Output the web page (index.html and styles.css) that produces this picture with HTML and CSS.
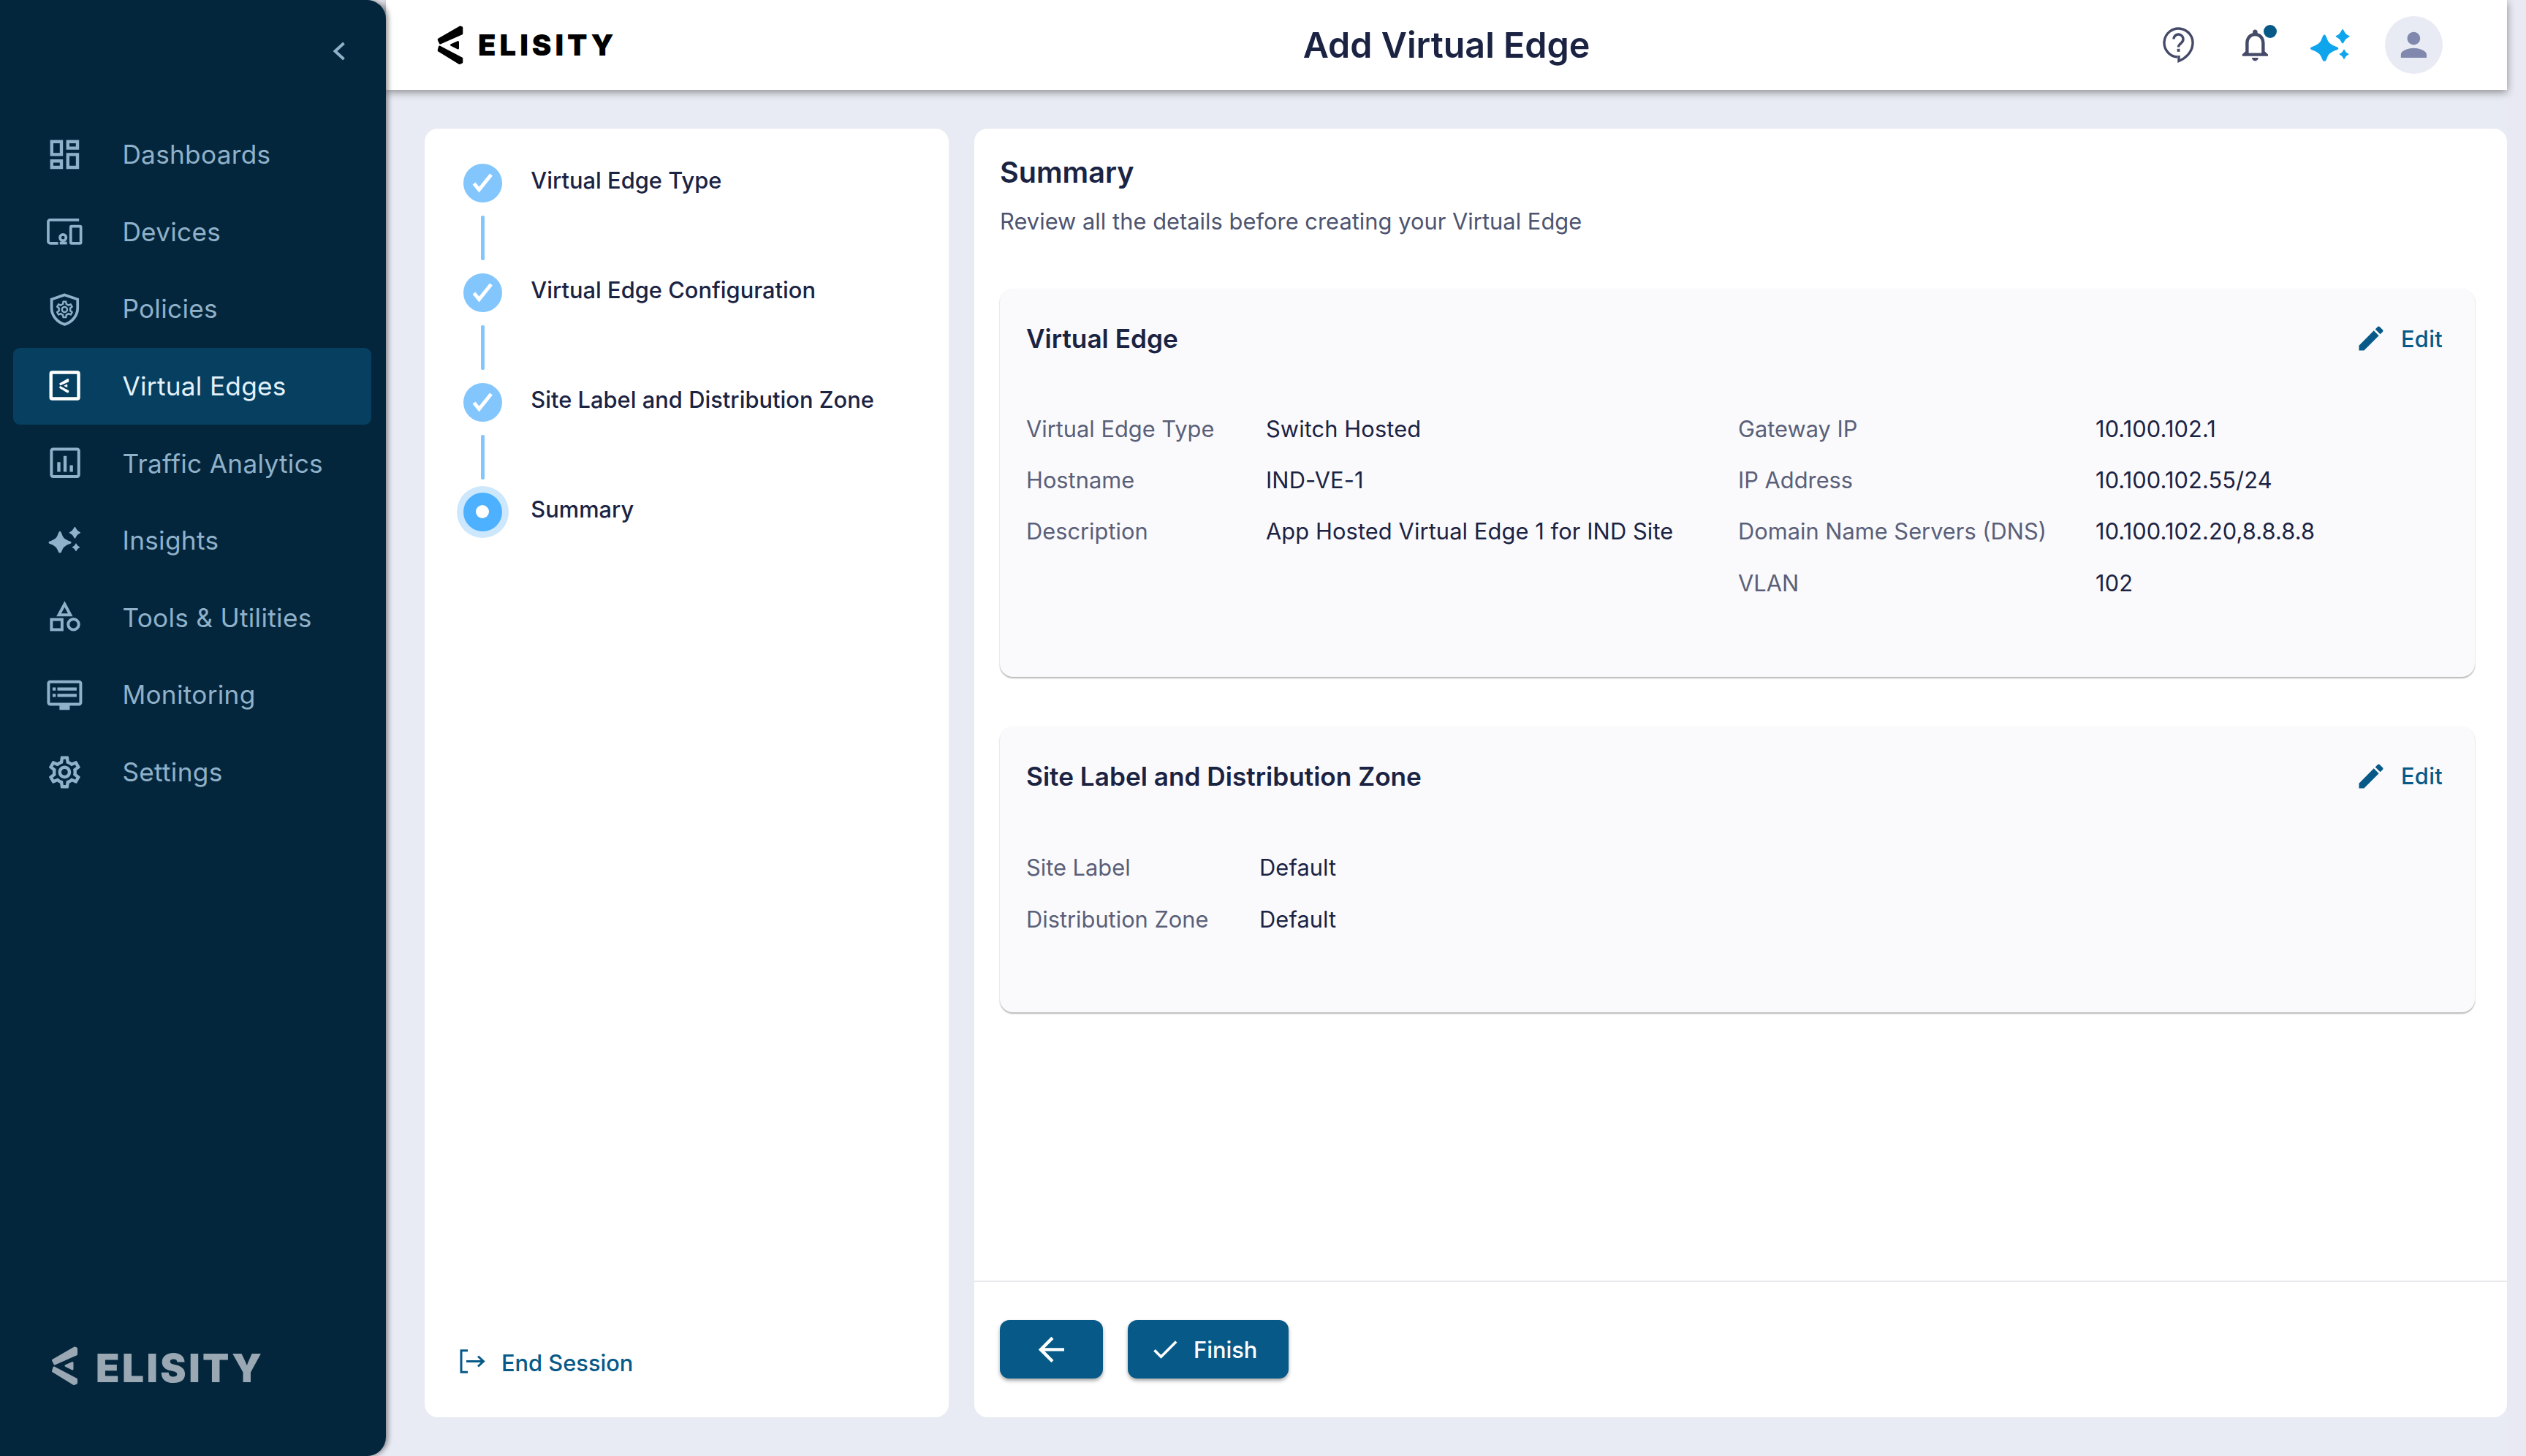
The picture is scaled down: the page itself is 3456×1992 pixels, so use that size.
FILE: index.html
```html
<!DOCTYPE html>
<html lang="en">
<head>
<meta charset="utf-8">
<title>Add Virtual Edge</title>
<link rel="stylesheet" href="styles.css">
</head>
<body>
<svg class="defs" width="0" height="0" aria-hidden="true">
  <defs>
    <symbol id="mark" viewBox="0 0 35 53">
      <g fill="currentColor" stroke="currentColor" stroke-width="3" stroke-linejoin="round">
        <polygon points="31,2 33.5,3 33.5,11 4,24 1.5,19"/>
        <polygon points="3,29 33.5,45 33.5,50 30,51.500 1.500,34"/>
        <polygon points="19,26.500 28,22.500 28,31"/>
      </g>
    </symbol>
    <symbol id="gear" viewBox="0 0 24 24">
      <path fill="currentColor" d="M19.43 12.98c.04-.32.07-.64.07-.98 0-.34-.03-.66-.07-.98l2.11-1.65c.19-.15.24-.42.12-.64l-2-3.46c-.09-.16-.26-.25-.44-.25-.06 0-.12.01-.17.03l-2.49 1c-.52-.4-1.08-.73-1.69-.98l-.38-2.65C14.46 2.18 14.25 2 14 2h-4c-.25 0-.46.18-.49.42l-.38 2.65c-.61.25-1.17.59-1.69.98l-2.49-1c-.06-.02-.12-.03-.18-.03-.17 0-.34.09-.43.25l-2 3.46c-.13.22-.07.49.12.64l2.11 1.65c-.04.32-.07.65-.07.98 0 .33.03.66.07.98l-2.11 1.65c-.19.15-.24.42-.12.64l2 3.46c.09.16.26.25.44.25.06 0 .12-.01.17-.03l2.49-1c.52.4 1.08.73 1.69.98l.38 2.65c.03.24.24.42.49.42h4c.25 0 .46-.18.49-.42l.38-2.65c.61-.25 1.17-.59 1.69-.98l2.49 1c.06.02.12.03.18.03.17 0 .34-.09.43-.25l2-3.46c.12-.22.07-.49-.12-.64l-2.11-1.65zm-1.98-1.71c.04.31.05.52.05.73 0 .21-.02.43-.05.73l-.14 1.13.89.7 1.08.84-.7 1.21-1.27-.51-1.04-.42-.9.68c-.43.32-.84.56-1.25.73l-1.06.43-.16 1.13-.2 1.35h-1.4l-.19-1.35-.16-1.13-1.06-.43c-.43-.18-.83-.41-1.23-.71l-.91-.7-1.06.43-1.27.51-.7-1.21 1.08-.84.89-.7-.14-1.13c-.03-.31-.05-.54-.05-.74s.02-.43.05-.73l.14-1.13-.89-.7-1.08-.84.7-1.21 1.27.51 1.04.42.9-.68c.43-.32.84-.56 1.25-.73l1.06-.43.16-1.13.2-1.35h1.39l.19 1.35.16 1.13 1.06.43c.43.18.83.41 1.23.71l.91.7 1.06-.43 1.27-.51.7 1.21-1.07.85-.89.7.14 1.13zM12 8c-2.21 0-4 1.79-4 4s1.79 4 4 4 4-1.79 4-4-1.79-4-4-4zm0 6c-1.1 0-2-.9-2-2s.9-2 2-2 2 .9 2 2-.9 2-2 2z"/>
    </symbol>
    <symbol id="sparkles" viewBox="0 0 44 36">
      <path fill="currentColor" d="M15.600 6 C16.500 6 17.500 8 18.500 10.500 C19.800 14.500 21.500 17 30 20 C31.700 20.700 31.700 22.300 30 23 C22 25.500 19.500 29 18.500 32.500 C17.500 35 16.500 36 15.600 36 C14.700 36 13.700 35 12.700 32.500 C11.500 29 9 25.500 1 23 C-.4 22.300 -.4 20.700 1 20 C9.500 17 11.500 14.500 12.700 10.500 C13.700 8 14.700 6 15.600 6 Z"/>
      <path fill="currentColor" d="M36 0 C36.600 0 37.400 1.500 38.200 3 C39 4.500 40.500 6 43 7.200 C44 7.700 44 8.300 43 8.800 C40.500 10 39 11.500 38.200 13 C37.400 14.500 36.600 16 36 16 C35.400 16 34.600 14.500 33.800 13 C33 11.500 31.500 10 29 8.800 C28 8.300 28 7.700 29 7.200 C31.500 6 33 4.500 33.800 3 C34.600 1.500 35.400 0 36 0 Z"/>
      <path fill="currentColor" d="M37.600 22.500 C38 22.500 38.400 23.500 39 24.500 C39.600 25.500 40.500 26.500 42.500 27.500 C43 27.800 43 28.200 42.500 28.500 C40.500 29.500 39.600 30.500 39 31.500 C38.400 32.500 38 33.500 37.600 33.500 C37.200 33.500 36.800 32.500 36.200 31.500 C35.600 30.500 34.700 29.500 32.700 28.500 C32.200 28.200 32.200 27.800 32.700 27.500 C34.700 26.500 35.600 25.500 36.200 24.500 C36.800 23.500 37.200 22.500 37.600 22.500 Z"/>
    </symbol>
    <symbol id="pencil" viewBox="0 0 24 24">
      <path fill="currentColor" d="M3 17.250V21h3.750L17.810 9.940l-3.750-3.750L3 17.250zM20.710 7.040c.39-.39.39-1.020 0-1.410l-2.340-2.340c-.39-.39-1.020-.39-1.410 0l-1.830 1.830 3.750 3.750 1.830-1.830z"/>
    </symbol>
    <symbol id="check" viewBox="0 0 24 24">
      <path fill="currentColor" d="M9 16.170 4.830 12l-1.420 1.410L9 19 21 7l-1.410-1.410z"/>
    </symbol>
    <symbol id="step-check" viewBox="0 0 30 28">
      <path d="M3.500 15 10.500 23.500 27 3" fill="none" stroke="currentColor" stroke-width="5"/>
    </symbol>
  </defs>
</svg>
<div class="app">
  <aside class="sidebar">
    <div class="collapse">
      <svg class="chevron" viewBox="0 0 18 26"><path d="M15.500 2 3.500 13l12 11" fill="none" stroke="currentColor" stroke-width="4"/></svg>
    </div>
    <nav class="nav">
      <a class="nav-item">
        <svg class="nav-icon" viewBox="0 0 24 24"><path fill="currentColor" d="M19 5v2h-4V5h4M9 5v6H5V5h4m10 8v6h-4v-6h4M9 17v2H5v-2h4M21 3h-8v6h8V3zM11 3H3v10h8V3zm10 8h-8v10h8V11zm-10 4H3v6h8v-6z"/></svg>
        <span class="nav-text">Dashboards</span>
      </a>
      <a class="nav-item">
        <svg class="nav-icon" viewBox="0 0 24 24"><g fill="none" stroke="currentColor" stroke-width="1.700"><path d="M21 4.500H3a1.200 1.200 0 0 0-1.200 1.200v12.100a1.200 1.200 0 0 0 1.200 1.200h5"/><path d="M9 18.900h4.500"/><rect x="15.800" y="8.500" width="6.300" height="10.500" rx=".5"/><circle cx="11" cy="15.500" r="1.900"/></g></svg>
        <span class="nav-text">Devices</span>
      </a>
      <a class="nav-item">
        <svg class="nav-icon" viewBox="0 0 24 24"><path fill="none" stroke="currentColor" stroke-width="1.700" d="M12 2.900 3.900 5.700v5.400c0 4.600 3.300 8.800 8.100 10.200 4.800-1.400 8.100-5.600 8.100-10.200V5.700L12 2.900z"/><use href="#gear" x="5.500" y="5.500" width="13" height="13"/></svg>
        <span class="nav-text">Policies</span>
      </a>
      <a class="nav-item is-active">
        <svg class="nav-icon" viewBox="0 0 24 24"><rect x="3.500" y="3.400" width="17.200" height="16.400" rx=".8" fill="none" stroke="currentColor" stroke-width="2"/><use href="#mark" x="8.500" y="7.200" width="6.400" height="9"/></svg>
        <span class="nav-text">Virtual Edges</span>
      </a>
      <a class="nav-item">
        <svg class="nav-icon" viewBox="0 0 24 24"><rect x="3.800" y="3" width="17" height="17" rx="1" fill="none" stroke="currentColor" stroke-width="1.800"/><path fill="currentColor" d="M7.400 11h2v6h-2zM11.300 7.200h2V17h-2zM15.200 13h2v4h-2z"/></svg>
        <span class="nav-text">Traffic Analytics</span>
      </a>
      <a class="nav-item">
        <svg class="nav-icon" viewBox="0 0 24 24"><use href="#sparkles" x="2" y="3.500" width="20" height="16.400"/></svg>
        <span class="nav-text">Insights</span>
      </a>
      <a class="nav-item">
        <svg class="nav-icon" viewBox="0 0 24 24"><g fill="none" stroke="currentColor" stroke-width="1.800"><path d="m12 3.400 3.600 6.700H8.400z"/><rect x="3.800" y="13" width="6.600" height="6.300"/><circle cx="17.500" cy="16" r="3.300"/></g></svg>
        <span class="nav-text">Tools &amp; Utilities</span>
      </a>
      <a class="nav-item">
        <svg class="nav-icon" viewBox="0 0 24 24"><rect x="2" y="3.500" width="20" height="14" rx="1" fill="none" stroke="currentColor" stroke-width="1.800"/><path fill="currentColor" d="M4.500 7h2v2h-2zM7.500 7h12v2h-12zM4.500 11h2v2h-2zM7.500 11h12v2h-12zM8.800 18h6.400v3H8.800z"/></svg>
        <span class="nav-text">Monitoring</span>
      </a>
      <a class="nav-item">
        <svg class="nav-icon" viewBox="0 0 24 24"><use href="#gear" width="24" height="24"/></svg>
        <span class="nav-text">Settings</span>
      </a>
    </nav>
    <div class="side-logo">
      <svg class="side-mark" viewBox="0 0 35 53"><use href="#mark"/></svg>
      <span class="side-word">ELISITY</span>
    </div>
  </aside>
  <div class="content">
    <header class="topbar">
      <div class="top-logo">
        <svg class="top-mark" viewBox="0 0 35 53"><use href="#mark"/></svg>
        <span class="top-word">ELISITY</span>
      </div>
      <h1 class="page-title">Add Virtual Edge</h1>
      <div class="top-actions">
        <svg class="help" viewBox="0 0 43 50"><path d="M20 41A19.500 19.500 0 1 1 40.800 24.500C39.500 35 31 43 22 46.500V39" fill="none" stroke="currentColor" stroke-width="3.400"/><path d="M15 16.500a6.500 6.500 0 1 1 10.400 5.200c-2.300 1.800-3.900 3-3.900 5.800" fill="none" stroke="currentColor" stroke-width="3.400"/><rect x="19.700" y="29.800" width="3.800" height="4" fill="currentColor"/></svg>
        <span class="bell-wrap">
          <svg class="bell" viewBox="0 0 24 24"><path fill="currentColor" d="M12 22c1.100 0 2-.9 2-2h-4c0 1.100.89 2 2 2zm6-6v-5c0-3.070-1.640-5.640-4.500-6.320V4c0-.83-.67-1.500-1.500-1.500s-1.500.67-1.500 1.500v.68C7.630 5.360 6 7.920 6 11v5l-2 2v1h16v-1l-2-2zm-2 1H8v-6c0-2.480 1.510-4.500 4-4.500s4 2.020 4 4.500v6z"/></svg>
          <span class="bell-dot"></span>
        </span>
        <svg class="spark" viewBox="0 0 44 36"><use href="#sparkles"/></svg>
        <span class="avatar">
          <svg class="person" viewBox="0 0 24 24"><path fill="currentColor" d="M12 12c2.210 0 4-1.790 4-4s-1.790-4-4-4-4 1.790-4 4 1.790 4 4 4zm0 2c-2.670 0-8 1.340-8 4v2h16v-2c0-2.660-5.330-4-8-4z"/></svg>
        </span>
      </div>
    </header>
    <main class="panels">
      <section class="steps-panel">
        <ol class="steps">
          <li class="step">
            <span class="dot"><svg class="dot-check" viewBox="0 0 30 28"><use href="#step-check"/></svg></span>
            <span class="step-label">Virtual Edge Type</span>
          </li>
          <li class="connector"></li>
          <li class="step">
            <span class="dot"><svg class="dot-check" viewBox="0 0 30 28"><use href="#step-check"/></svg></span>
            <span class="step-label">Virtual Edge Configuration</span>
          </li>
          <li class="connector"></li>
          <li class="step">
            <span class="dot"><svg class="dot-check" viewBox="0 0 30 28"><use href="#step-check"/></svg></span>
            <span class="step-label">Site Label and Distribution Zone</span>
          </li>
          <li class="connector"></li>
          <li class="step">
            <span class="dot is-current"></span>
            <span class="step-label">Summary</span>
          </li>
        </ol>
        <a class="end-session">
          <svg class="end-icon" viewBox="0 0 36 33"><path d="M11 1.700H2v29.600h9" fill="none" stroke="currentColor" stroke-width="3"/><path d="M9 16.500h22M25 9.500l7.500 7-7.500 7" fill="none" stroke="currentColor" stroke-width="3"/></svg>
          <span>End Session</span>
        </a>
      </section>
      <section class="main-panel">
        <div class="main-body">
          <h2 class="main-title">Summary</h2>
          <p class="main-sub">Review all the details before creating your Virtual Edge</p>
          <article class="card">
            <div class="card-head">
              <h3 class="card-title">Virtual Edge</h3>
              <a class="edit"><svg class="edit-icon" viewBox="0 0 24 24"><use href="#pencil"/></svg><span>Edit</span></a>
            </div>
            <dl class="grid grid-edge">
              <dt>Virtual Edge Type</dt><dd>Switch Hosted</dd><dt>Gateway IP</dt><dd>10.100.102.1</dd>
              <dt>Hostname</dt><dd>IND-VE-1</dd><dt>IP Address</dt><dd>10.100.102.55/24</dd>
              <dt>Description</dt><dd>App Hosted Virtual Edge 1 for IND Site</dd><dt>Domain Name Servers (DNS)</dt><dd>10.100.102.20,8.8.8.8</dd>
              <dt class="col-3">VLAN</dt><dd>102</dd>
            </dl>
          </article>
          <article class="card card-site">
            <div class="card-head">
              <h3 class="card-title">Site Label and Distribution Zone</h3>
              <a class="edit"><svg class="edit-icon" viewBox="0 0 24 24"><use href="#pencil"/></svg><span>Edit</span></a>
            </div>
            <dl class="grid grid-site">
              <dt>Site Label</dt><dd>Default</dd>
              <dt>Distribution Zone</dt><dd>Default</dd>
            </dl>
          </article>
        </div>
        <footer class="main-foot">
          <button class="btn btn-back" type="button"><svg class="btn-arrow" viewBox="0 0 24 24"><path fill="currentColor" d="M20 11H7.830l5.590-5.590L12 4l-8 8 8 8 1.410-1.410L7.830 13H20v-2z"/></svg></button>
          <button class="btn btn-finish" type="button"><svg class="btn-check" viewBox="0 0 24 24"><use href="#check"/></svg><span>Finish</span></button>
        </footer>
      </section>
    </main>
  </div>
</div>
</body>
</html>
```

FILE: styles.css
```css
* { box-sizing: border-box; }
html, body { margin: 0; padding: 0; }
body {
  width: 3456px;
  height: 1992px;
  overflow: hidden;
  background: #e9e9f3;
  font-family: Inter, "Noto Sans", sans-serif;
  color: #1b2343;
}
.defs { display: block; height: 0; }
.app { display: flex; width: 3456px; height: 1992px; }

/* sidebar */
.sidebar {
  position: relative;
  z-index: 2;
  flex: none;
  width: 528px;
  height: 1992px;
  display: flex;
  flex-direction: column;
  background: #04263c;
  border-radius: 0 26px 26px 0;
  box-shadow: 3px 0 7px rgba(0, 0, 0, .42);
  color: #8fb1c9;
}
.collapse { height: 159px; flex: none; display: flex; justify-content: flex-end; align-items: flex-start; padding: 57px 55px 0 0; }
.chevron { width: 18px; height: 26px; color: #8fb1c9; }
.nav { display: flex; flex-direction: column; padding: 0 20px 0 18px; }
.nav-item {
  display: flex;
  align-items: center;
  gap: 53px;
  height: 105.6px;
  padding-left: 43.6px;
  border-radius: 9px;
  font-size: 35.2px;
  font-weight: 400;
  letter-spacing: .3px;
}
.nav-text { padding-bottom: 1px; }
.nav-icon { flex: none; width: 52.8px; height: 52.8px; }
.is-active { background: #063f5f; color: #e3f1fb; }
.is-active .nav-icon { color: #fff; }
.side-logo { margin-top: auto; display: flex; align-items: flex-end; gap: 25px; padding: 0 0 97px 71px; color: #9aa8b4; }
.side-mark { flex: none; width: 35px; height: 53px; }
.side-word { font-size: 53px; line-height: 53px; font-weight: 900; letter-spacing: 3.5px; margin-bottom: -3.5px; }

/* top bar */
.content { flex: 1; min-width: 0; display: flex; flex-direction: column; padding-right: 26px; background: #e9e9f3; }
.topbar {
  position: relative;
  z-index: 1;
  flex: none;
  height: 123px;
  display: flex;
  align-items: center;
  justify-content: space-between;
  background: #fff;
  box-shadow: 0 3px 11px rgba(0, 0, 0, .42);
  padding: 0 88px 0 70px;
}
.top-logo { display: flex; align-items: center; gap: 20px; color: #000; width: 518px; }
.top-mark { flex: none; width: 36px; height: 53px; }
.top-word { font-size: 40px; line-height: 53px; font-weight: 900; letter-spacing: 5px; }
.page-title { margin: 0; font-size: 48.4px; line-height: 60px; font-weight: 600; color: #1b2343; }
.top-actions { display: flex; align-items: center; width: 500px; justify-content: flex-end; color: #454a68; }
.help { flex: none; width: 43px; height: 50px; margin-right: 57px; }
.bell-wrap { position: relative; flex: none; width: 52.8px; height: 52.8px; margin-right: 49px; }
.bell { width: 52.8px; height: 52.8px; display: block; }
.bell-dot { position: absolute; top: -1px; right: -3px; width: 18px; height: 18px; border-radius: 50%; background: #075a88; }
.spark { flex: none; width: 54px; height: 44px; margin-right: 48px; color: #0ea5ed; }
.avatar { flex: none; width: 79px; height: 79px; border-radius: 50%; background: #e9ebf4; display: flex; align-items: center; justify-content: center; color: #8088ad; }
.person { width: 52.8px; height: 52.8px; }

/* panels */
.panels { flex: 1; min-height: 0; display: flex; gap: 35px; padding: 53px 0 53px 53px; background: #e8ebf3; }
.steps-panel {
  flex: none;
  width: 717px;
  display: flex;
  flex-direction: column;
  justify-content: space-between;
  background: #fff;
  border-radius: 18px;
  padding: 48px 0 53px 53px;
}
.steps { list-style: none; margin: 0; padding: 0; display: flex; flex-direction: column; }
.step { display: flex; align-items: center; gap: 39.5px; height: 53px; }
.connector { width: 4.4px; height: 61px; margin: 18px 0 18px 24.200px; border-radius: 2px; background: #82c6fd; }
.dot { flex: none; width: 52.8px; height: 52.8px; border-radius: 50%; background: #82c6fd; display: flex; align-items: center; justify-content: center; color: #fff; }
.dot-check { width: 30px; height: 28px; }
.dot.is-current { background: #4db1ff; box-shadow: 0 0 0 9px #cde8fd; }
.dot.is-current::after { content: ""; width: 18px; height: 18px; border-radius: 50%; background: #fff; }
.step-label { font-size: 30.8px; line-height: 44px; font-weight: 500; letter-spacing: .03px; padding-bottom: 7px; color: #1b2343; }
.end-session { display: flex; align-items: center; gap: 21px; margin-left: -5px; height: 44px; font-size: 30.8px; font-weight: 500; color: #075a88; }
.end-icon { flex: none; width: 36px; height: 33px; margin-top: -3px; }

.main-panel { flex: 1; min-width: 0; display: flex; flex-direction: column; background: #fff; border-radius: 18px; }
.main-body { flex: 1; min-height: 0; padding: 38px 44px 0 35px; }
.main-title { margin: 0; font-size: 39.6px; line-height: 44px; font-weight: 600; color: #1b2343; }
.main-sub { margin: 23px 0 0; font-size: 30.8px; line-height: 44px; letter-spacing: .04px; color: #4e546f; }
.card {
  margin-top: 70px;
  padding: 35px 44px 93px 36px;
  border-radius: 18px;
  background: #fafafc;
  box-shadow: 0 2px 2px rgba(0, 0, 0, .28), 0 0 2px rgba(0, 0, 0, .04);
}
.card + .card { margin-top: 68px; }
.card-head { display: flex; align-items: center; justify-content: space-between; height: 66px; margin-bottom: 55px; }
.card-site .card-head { margin-bottom: 57px; }
.card-title { margin: 0; font-size: 35.2px; line-height: 44px; font-weight: 600; color: #1b2343; }
.edit { display: flex; align-items: center; gap: 19px; font-size: 30.8px; font-weight: 500; letter-spacing: .3px; color: #075a88; }
.edit-icon { width: 44px; height: 44px; }
.grid { margin: 0; display: grid; grid-auto-rows: 70.4px; align-items: center; font-size: 30.8px; }
.grid-edge { grid-template-columns: 328px 646px 489px 1fr; }
.grid-site { grid-template-columns: 319px 1fr; }
.grid dt { color: #5a6079; }
.grid dd { margin: 0; color: #1b2343; letter-spacing: .1px; }
.col-3 { grid-column: 3; }

.main-foot { flex: none; height: 187px; display: flex; align-items: flex-start; gap: 34px; padding: 52px 35px 0; border-top: 2px solid #e9e9ec; }
.btn {
  display: flex;
  align-items: center;
  justify-content: center;
  height: 80px;
  border: 0;
  padding: 0;
  border-radius: 13px;
  background: #075a88;
  color: #fff;
  font-family: inherit;
  font-size: 30.8px;
  font-weight: 500;
  box-shadow: 0 3px 5px rgba(0, 0, 0, .35);
}
.btn-back { width: 141px; }
.btn-finish { width: 220px; gap: 17px; justify-content: flex-start; padding-left: 29px; }
.btn-arrow { width: 52.8px; height: 52.8px; }
.btn-check { width: 44px; height: 44px; }
```
